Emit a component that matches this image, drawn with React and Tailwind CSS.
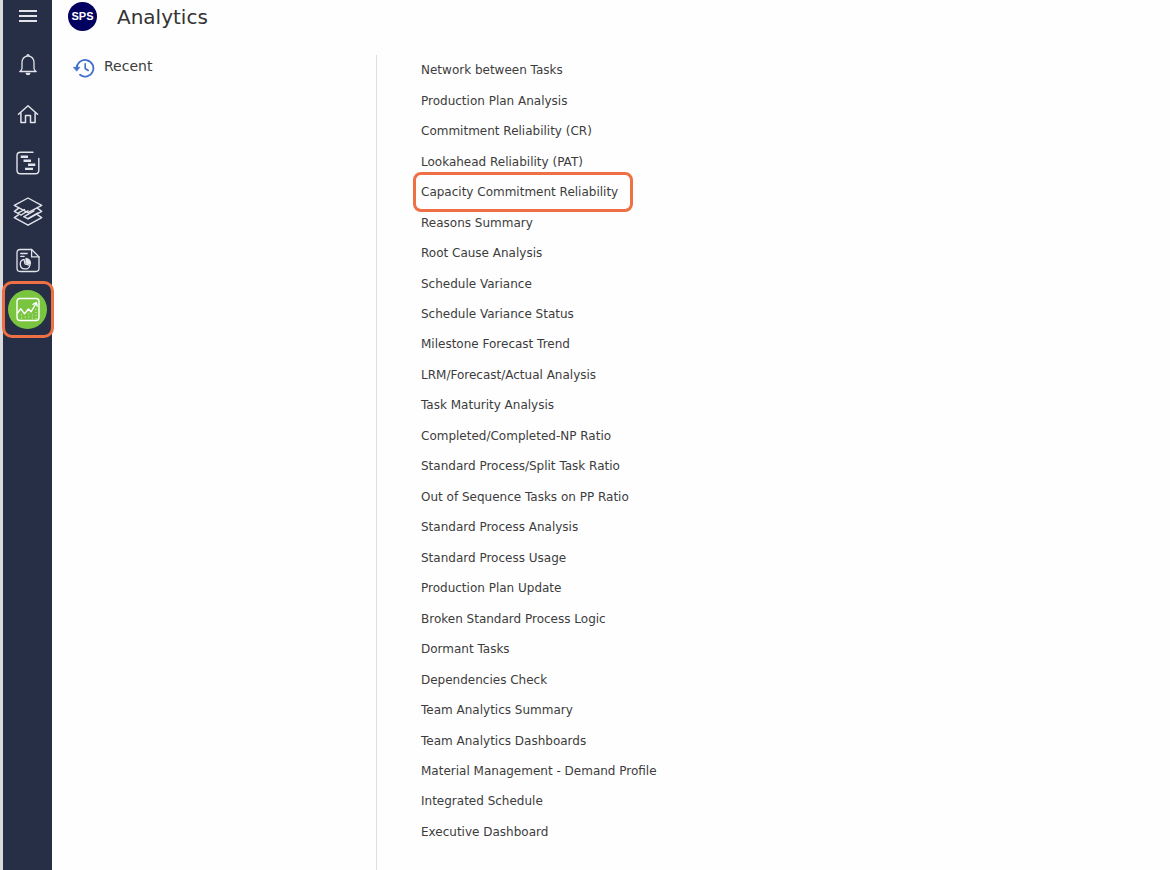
const reports = [
  "Network between Tasks",
  "Production Plan Analysis",
  "Commitment Reliability (CR)",
  "Lookahead Reliability (PAT)",
  "Capacity Commitment Reliability",
  "Reasons Summary",
  "Root Cause Analysis",
  "Schedule Variance",
  "Schedule Variance Status",
  "Milestone Forecast Trend",
  "LRM/Forecast/Actual Analysis",
  "Task Maturity Analysis",
  "Completed/Completed-NP Ratio",
  "Standard Process/Split Task Ratio",
  "Out of Sequence Tasks on PP Ratio",
  "Standard Process Analysis",
  "Standard Process Usage",
  "Production Plan Update",
  "Broken Standard Process Logic",
  "Dormant Tasks",
  "Dependencies Check",
  "Team Analytics Summary",
  "Team Analytics Dashboards",
  "Material Management - Demand Profile",
  "Integrated Schedule",
  "Executive Dashboard",
];

const highlighted = "Capacity Commitment Reliability";

function Icon({ children, strokeWidth = 1.3 }) {
  return (
    <svg
      viewBox="0 0 32 32"
      className="size-8"
      fill="none"
      stroke="currentColor"
      strokeWidth={strokeWidth}
      strokeLinecap="round"
      strokeLinejoin="round"
      aria-hidden="true"
    >
      {children}
    </svg>
  );
}

const navItems = [
  {
    label: "Notifications",
    icon: (
      <Icon>
        <path d="M16 6.800c-3.800.5-6 3.200-6 7v5.400c0 1.300-.4 2-2.200 3.300h16.400C22.400 21.200 22 20.500 22 19.200v-5.400c0-3.800-2.200-6.500-6-7z" />
        <path d="M15 6.700c0-1.400 2-1.400 2 0" />
        <path d="M14.200 24.400h3.600c-.4 1.600-3.200 1.600-3.600 0z" fill="currentColor" />
      </Icon>
    ),
  },
  {
    label: "Home",
    icon: (
      <Icon strokeWidth={1.5}>
        <path d="M6.500 16.300 16 7.700l9.500 8.600" />
        <path d="M8.900 15V24.500h4.600v-7h5v7h4.600V15" />
      </Icon>
    ),
  },
  {
    label: "Schedules",
    icon: (
      <Icon strokeWidth={1.4}>
        <path d="M21 5.200H8.500C6.300 5.200 5 6.500 5 8.700v14.600c0 2.200 1.300 3.500 3.500 3.500h14.800c2.200 0 3.500-1.300 3.500-3.500V11.500" />
        <g strokeWidth="2.4" strokeLinecap="butt">
          <path d="M8.700 9.700h7.300M11.500 13.700h7.500M16 17.800h7.300M13 21.900h8" />
        </g>
      </Icon>
    ),
  },
  {
    label: "Layers",
    icon: (
      <Icon strokeWidth={1.4}>
        <path d="M16 2 29.700 9.300 16 16.700 2.300 9.300z" />
        <path d="m6.400 12.400-4.100 3L9 19M25.600 12.400l4.100 3L16 22.800l-4-2.100" />
        <path d="m6.400 18.900-4.100 2.700L16 29.200l13.700-7.600-4.100-2.700" />
        <path d="m6 17.200 6.500-3.700M9 19l7-4.200M12 20.700l10-5.800M16 22.600l9.500-5.600" />
      </Icon>
    ),
  },
  {
    label: "Reports",
    icon: (
      <Icon>
        <path d="M19.600 4.500H8.200C6.200 4.500 5 5.700 5 7.700v15.600c0 2 1.200 3.200 3.200 3.200h15.600c2 0 3.200-1.200 3.200-3.200V11.900L19.600 4.500z" />
        <path d="M19.600 4.500v7.400H27M8.700 8.500h6.500M8.700 11.300h3.500" />
        <path d="M12 14.300a4.900 4.900 0 1 0 5.900 6L13 18.800z" />
        <path d="M14 13.500v4.300l4.300 1.400c.7-2.700-1.200-5.400-4.300-5.700z" fill="currentColor" />
      </Icon>
    ),
  },
];

export default function App() {
  return (
    <div className="flex min-h-screen border-l-[3px] border-[#d9dad9] bg-[#fefefe] font-['Verdana','DejaVu_Sans',sans-serif] text-[#3c3c3c]">
      <nav aria-label="Main" className="flex w-[49px] shrink-0 flex-col items-center bg-[#272f47] text-[#e2e4ea]">
        <button type="button" aria-label="Menu" className="flex h-10 w-full items-center justify-center pb-2">
          <svg viewBox="0 0 20 14" className="h-[14px] w-5" fill="none" stroke="currentColor" strokeWidth="2" aria-hidden="true">
            <path d="M1 2h18M1 7h18M1 12h18" />
          </svg>
        </button>
        {navItems.map((item) => (
          <a key={item.label} href="#" aria-label={item.label} className="flex h-[49px] w-full items-center justify-center">
            {item.icon}
          </a>
        ))}
        <a
          href="#"
          aria-label="Analytics"
          aria-current="page"
          className="-mt-1 flex h-[57px] w-[52px] items-center justify-center rounded-[10px] border-[3px] border-[#ee7044]"
        >
          <span className="flex size-[39px] shrink-0 items-center justify-center rounded-full bg-[#79c540] text-white">
            <Icon strokeWidth={1.4}>
              <rect x="5" y="4.500" width="22" height="22" rx="3" />
              <path d="M5.500 19l3.400-4.200 3.600 5 4-4.800 2.500 2.800L24 9.500" />
              <path d="m21 10.300 3.300-1.800.9 3.600" />
              <g strokeWidth="1" strokeLinecap="butt" strokeDasharray="1 2" opacity=".75">
                <path d="M9.500 20.500v5M13.200 22.500v3M16.800 19.500v6M20.400 20.500v5M24 15v10.500" />
              </g>
            </Icon>
          </span>
        </a>
      </nav>

      <div className="flex min-w-0 flex-1 flex-col">
        <header className="flex h-[54px] shrink-0 items-start gap-5 pt-[2px] pl-4">
          <span className="flex size-[29px] items-center justify-center rounded-full bg-[#03015f] font-['Liberation_Sans',sans-serif] text-[11px] font-bold text-white">
            SPS
          </span>
          <h1 className="text-xl leading-[30px] text-[#333333]">Analytics</h1>
        </header>

        <main className="flex flex-1">
          <section className="w-[324px] shrink-0 pl-[21px]">
            <h2 className="flex items-center gap-[9px] text-sm leading-6">
              <svg viewBox="0 0 22 20" className="mt-[3px] h-5 w-[22px]" fill="none" stroke="#3f6fca" strokeWidth="1.8" strokeLinecap="round" strokeLinejoin="round" aria-hidden="true">
                <path d="M3.800 11A8.300 8.300 0 1 1 7 16.800" />
                <path d="M.8 9.300h6l-3 3.600z" fill="#3f6fca" strokeWidth=".8" />
                <path d="M12.200 5.800v4.700l3 2" strokeWidth="1.6" />
              </svg>
              Recent
            </h2>
          </section>

          <ul className="mt-px flex flex-1 flex-col border-l border-[#dedede] pb-[23px] pl-9 text-xs">
            {reports.map((name) => (
              <li key={name} className="relative flex min-h-[30px] flex-1 items-center pl-2">
                <a href="#">{name}</a>
                {name === highlighted && (
                  <span className="pointer-events-none absolute -inset-y-[5px] left-0 w-[220px] rounded-lg border-[3px] border-[#ee7044]" />
                )}
              </li>
            ))}
          </ul>
        </main>
      </div>
    </div>
  );
}
